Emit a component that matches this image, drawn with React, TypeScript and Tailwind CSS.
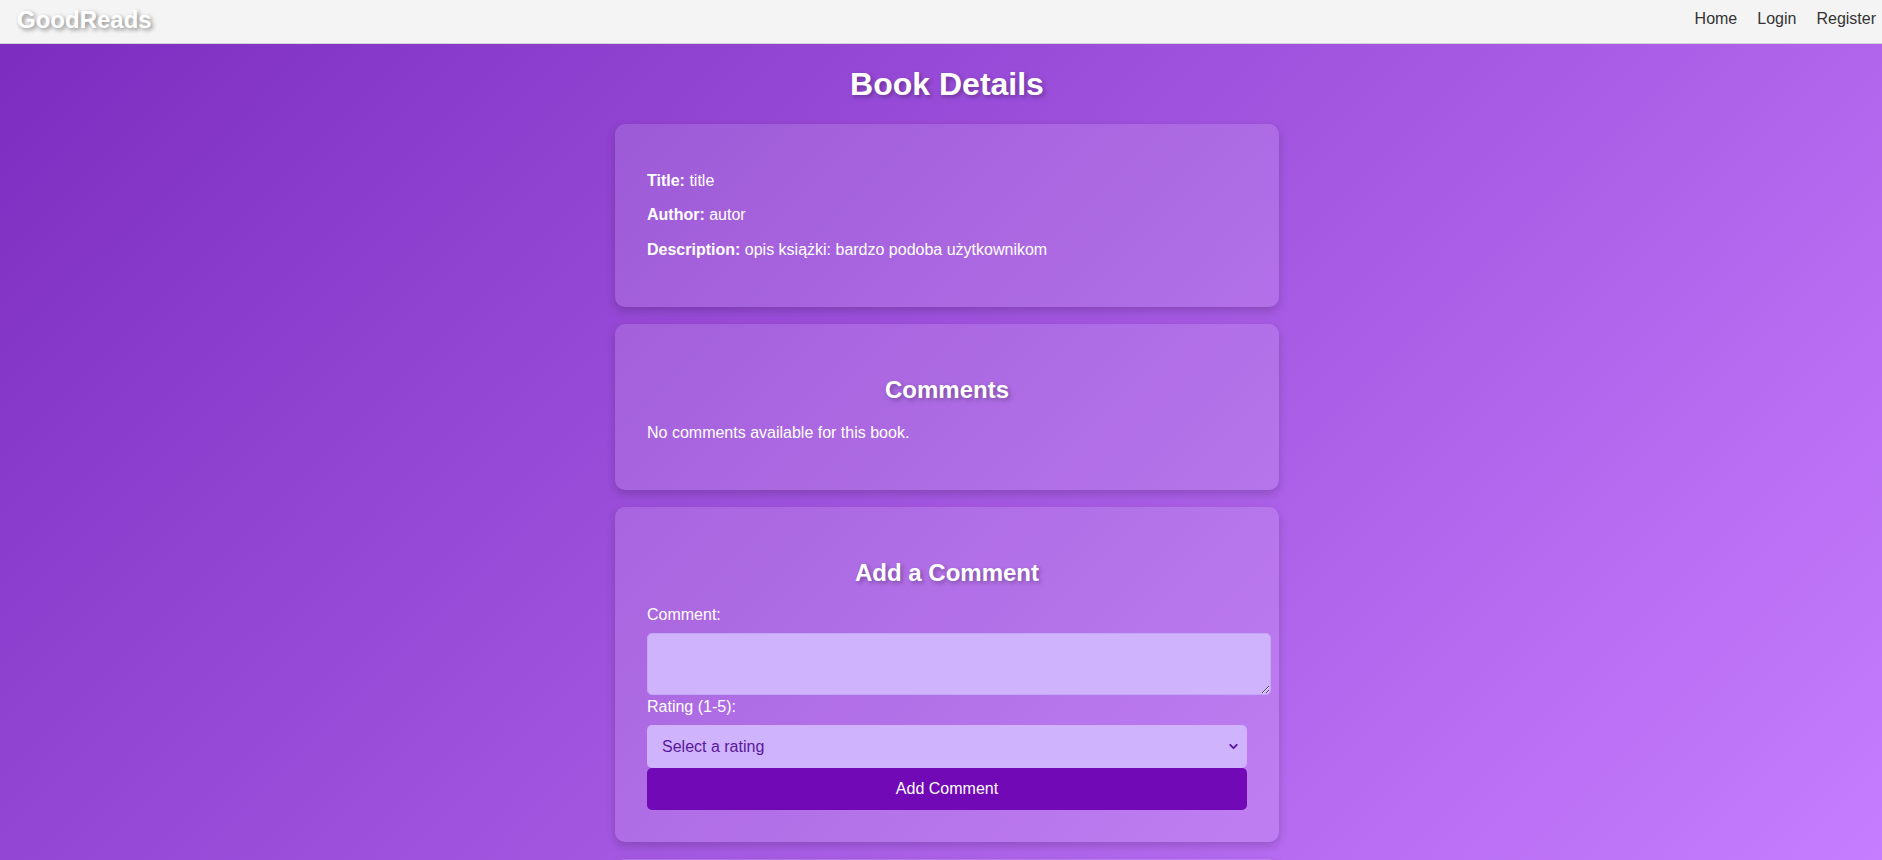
import { ChevronDown } from 'lucide-react'

const font = "font-['Liberation_Sans',Arial,sans-serif]"

function Navbar() {
  return (
    <nav className="flex h-[44px] items-center justify-between border-b border-[#d4d4d4] bg-[#f4f4f4] pb-[3px] pl-[17px] pr-[6px]">
      <a href="#" className="text-[24px] font-bold text-white [text-shadow:2px_2px_4px_rgba(0,0,0,0.45)]">
        GoodReads
      </a>
      <div className="mb-[2px] flex gap-5 text-[16px] text-[#333]">
        <a href="#">Home</a>
        <a href="#">Login</a>
        <a href="#">Register</a>
      </div>
    </nav>
  )
}

function Card({ children, className = '' }: { children?: React.ReactNode; className?: string }) {
  return (
    <section
      className={`mb-[17px] rounded-[10px] bg-white/[0.13] p-8 shadow-[0_4px_10px_rgba(0,0,0,0.18)] ${className}`}
    >
      {children}
    </section>
  )
}

function Heading({ children }: { children: React.ReactNode }) {
  return (
    <h2 className="my-[20px] text-center text-[24px] font-bold text-white [text-shadow:2px_2px_4px_rgba(0,0,0,0.3)]">
      {children}
    </h2>
  )
}

export default function App() {
  return (
    <div
      className={`${font} min-h-screen bg-[linear-gradient(135deg,#7b2cbf,#c77dff)] bg-fixed text-[16px] leading-[1.15] text-white`}
    >
      <Navbar />

      <main className="pl-[12px]">
        <div className="mx-auto w-[664px]">
          <h1 className="my-[21px] pt-px text-center text-[32px] font-bold text-white [text-shadow:2px_2px_4px_rgba(0,0,0,0.3)]">
            Book Details
          </h1>

          {/* Book info */}
          <Card>
            <p className="my-4">
              <strong>Title:</strong> title
            </p>
            <p className="my-4">
              <strong>Author:</strong> autor
            </p>
            <p className="my-4">
              <strong>Description:</strong> opis książki: bardzo podoba użytkownikom
            </p>
          </Card>

          {/* Comments */}
          <Card>
            <Heading>Comments</Heading>
            <p className="mb-4 mt-[18px]">No comments available for this book.</p>
          </Card>

          {/* Add comment form */}
          <Card>
            <Heading>Add a Comment</Heading>
            <form className="-mt-px flex flex-col items-start">
              <label className="mb-[9px] block">Comment:</label>
              <textarea className="block h-[62px] w-[624px] rounded-[5px] border border-[#c4a6f6] bg-[#cfb3fd] p-[10px] text-[#5a189a] outline-none" />
              <label className="mb-[9px] mt-[3px] block">Rating (1-5):</label>
              <div className="relative w-[600px]">
                <select
                  defaultValue=""
                  className="block h-[43px] w-full appearance-none rounded-[5px] bg-[#cfb3fd] pl-[15px] text-[16px] text-[#5a189a] outline-none"
                >
                  <option value="" disabled>
                    Select a rating
                  </option>
                  <option value="1">1</option>
                  <option value="2">2</option>
                  <option value="3">3</option>
                  <option value="4">4</option>
                  <option value="5">5</option>
                </select>
                <ChevronDown
                  className="pointer-events-none absolute right-[7px] top-[15px] size-[13px] text-[#5a189a]"
                  strokeWidth={3.5}
                />
              </div>
              <button
                type="button"
                className="h-[42px] w-[600px] rounded-[5px] bg-[#7209b7] text-[16px] text-white"
              >
                Add Comment
              </button>
            </form>
          </Card>

          {/* next section, only its top edge is in view */}
          <Card className="h-[120px]" />
        </div>
      </main>
    </div>
  )
}
